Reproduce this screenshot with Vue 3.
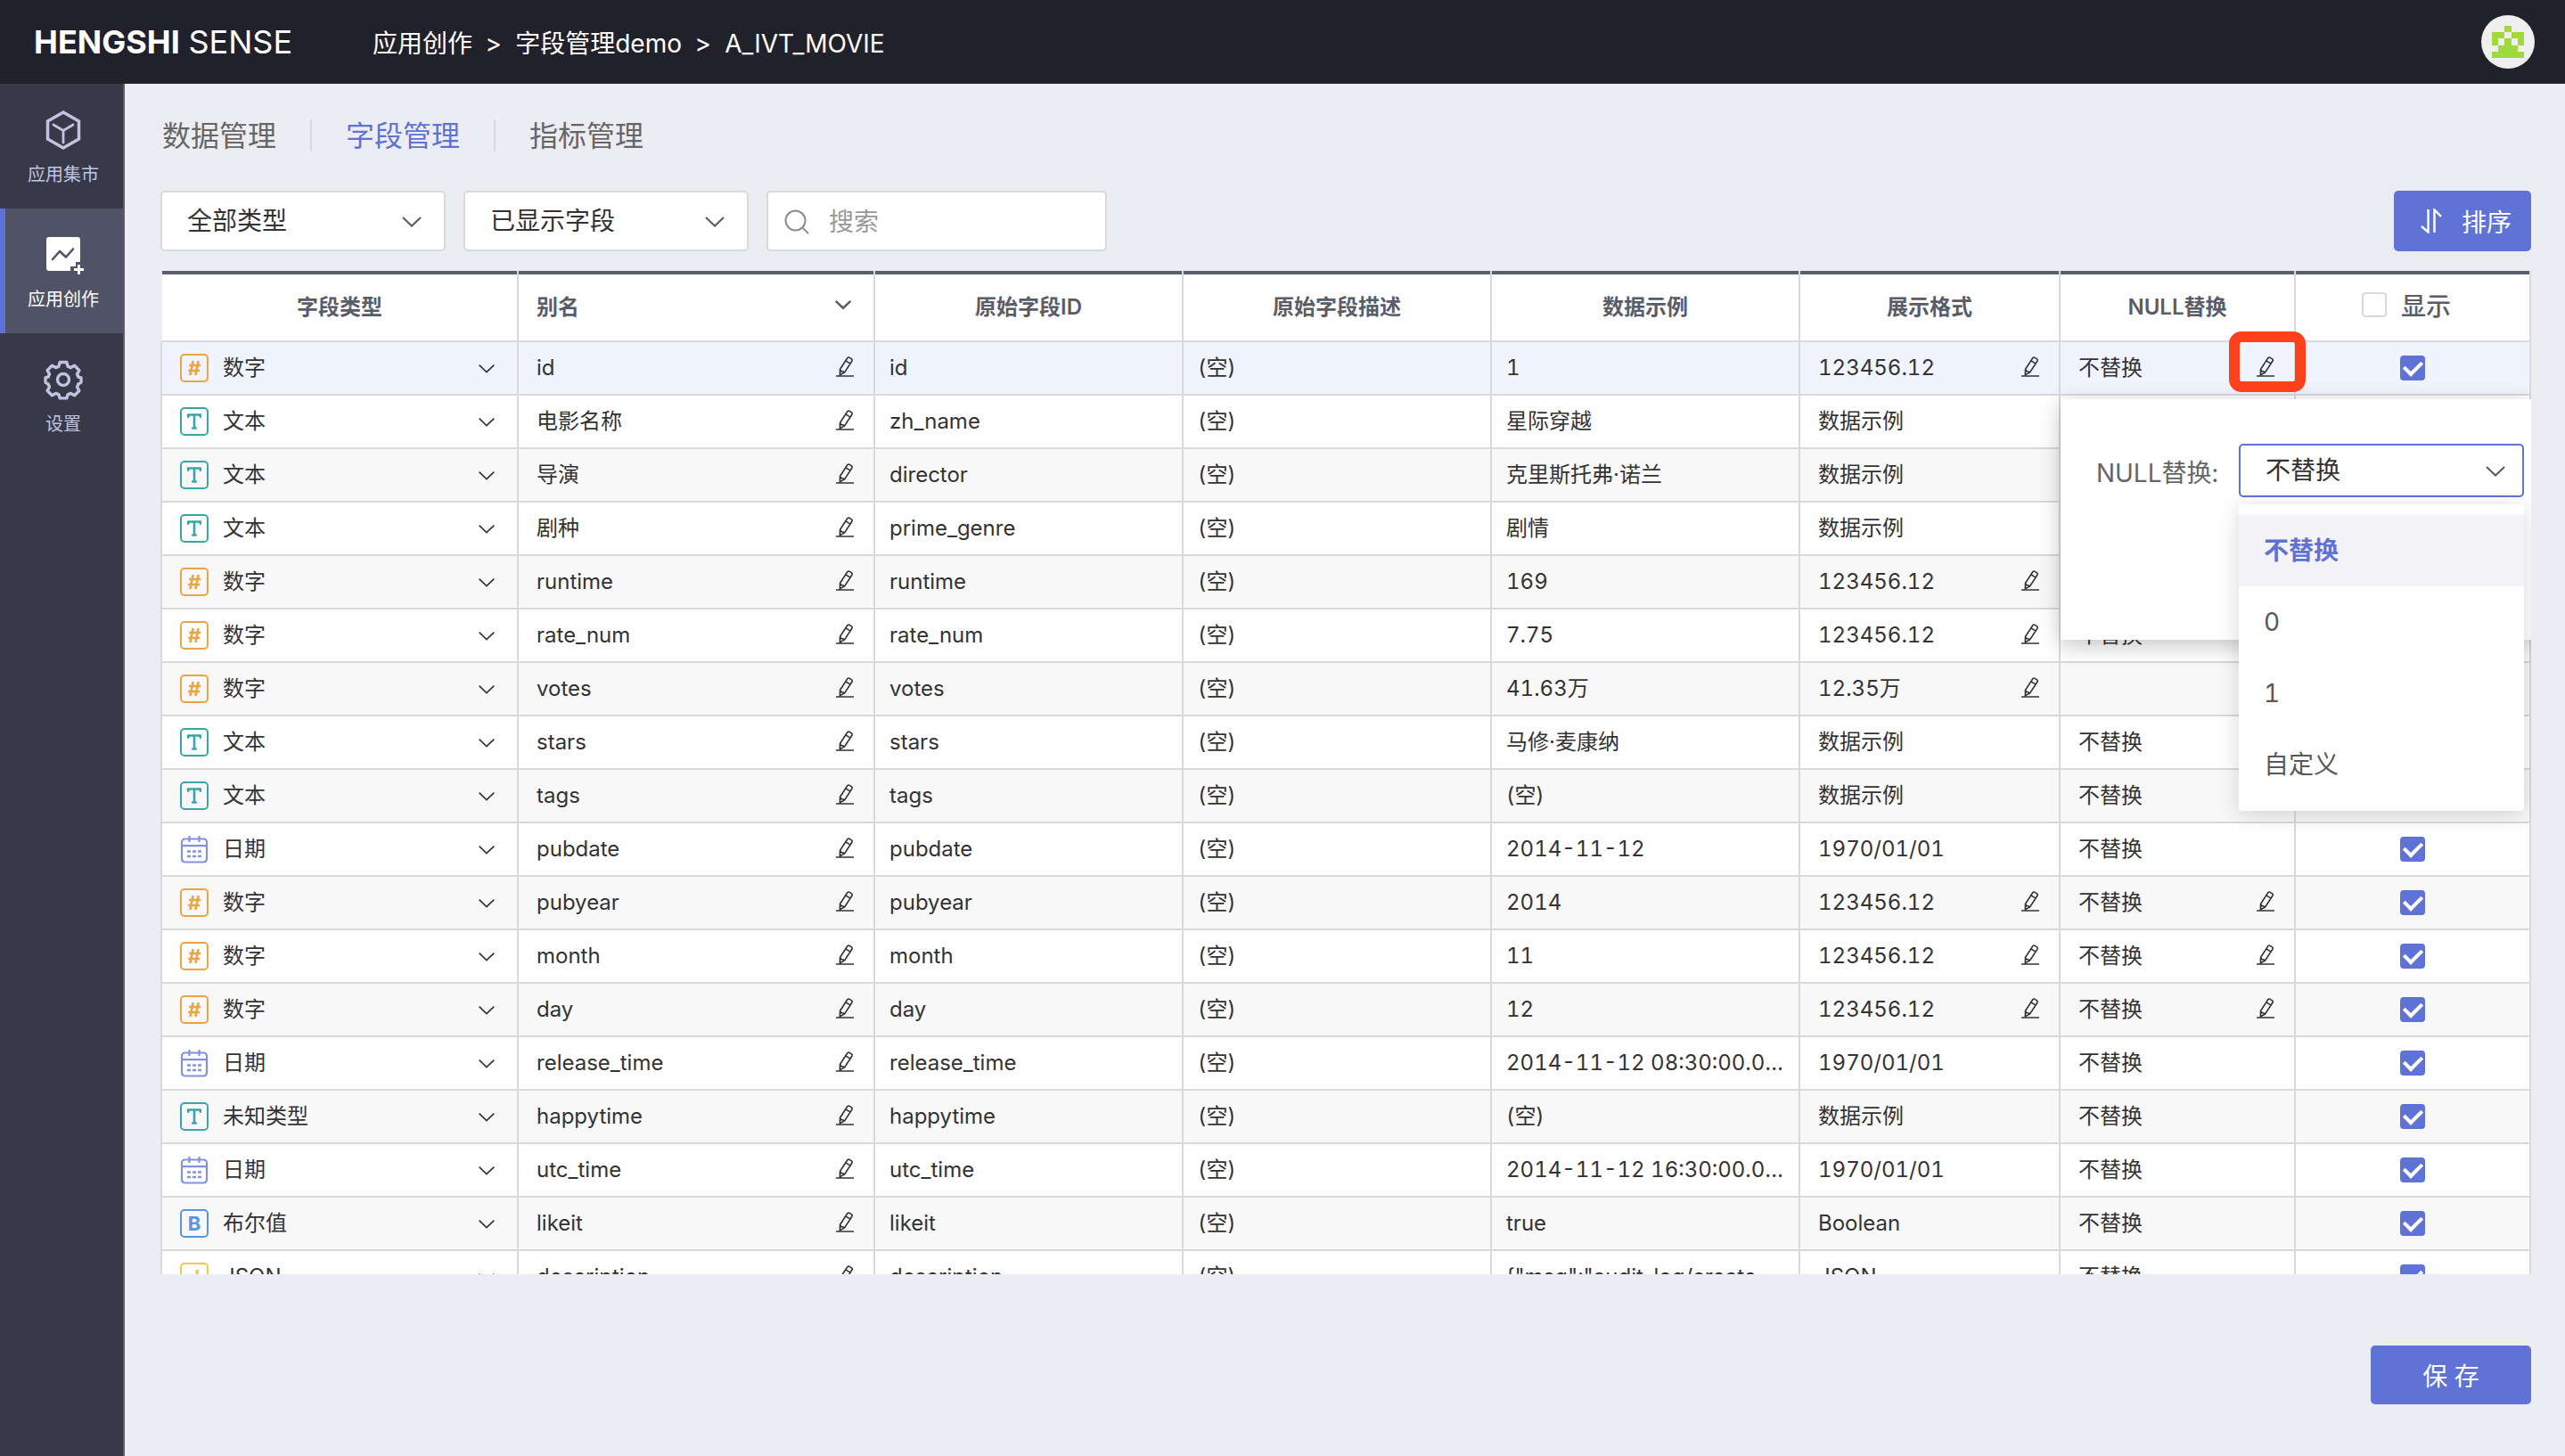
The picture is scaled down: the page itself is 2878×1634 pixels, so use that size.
<script setup>
import { ref } from 'vue'

const nav = [
  { label: '应用集市', icon: 'cube' },
  { label: '应用创作', icon: 'create', active: true },
  { label: '设置', icon: 'gear' },
]
const tabs = ['数据管理', '字段管理', '指标管理']
const crumbs = ['应用创作', '字段管理demo', 'A_IVT_MOVIE']

const typeNames = { num: '数字', text: '文本', date: '日期', unknown: '未知类型', bool: '布尔值', json: 'JSON' }

const field = (type, alias, id, sample, format, nullText = '不替换') => ({
  type, alias, id, sample, format, nullText,
  editable: type === 'num',
  visible: true,
})
const rows = ref([
  field('num', 'id', 'id', '1', '123456.12'),
  field('text', '电影名称', 'zh_name', '星际穿越', '数据示例'),
  field('text', '导演', 'director', '克里斯托弗·诺兰', '数据示例'),
  field('text', '剧种', 'prime_genre', '剧情', '数据示例'),
  field('num', 'runtime', 'runtime', '169', '123456.12'),
  field('num', 'rate_num', 'rate_num', '7.75', '123456.12'),
  field('num', 'votes', 'votes', '41.63万', '12.35万', ''),
  field('text', 'stars', 'stars', '马修·麦康纳', '数据示例'),
  field('text', 'tags', 'tags', '(空)', '数据示例'),
  field('date', 'pubdate', 'pubdate', '2014-11-12', '1970/01/01'),
  field('num', 'pubyear', 'pubyear', '2014', '123456.12'),
  field('num', 'month', 'month', '11', '123456.12'),
  field('num', 'day', 'day', '12', '123456.12'),
  field('date', 'release_time', 'release_time', '2014-11-12 08:30:00.000', '1970/01/01'),
  field('unknown', 'happytime', 'happytime', '(空)', '数据示例'),
  field('date', 'utc_time', 'utc_time', '2014-11-12 16:30:00.000', '1970/01/01'),
  field('bool', 'likeit', 'likeit', 'true', 'Boolean'),
  field('json', 'description', 'description', '{"msg":"audit_log/create_app"}', 'JSON'),
])

const nullOptions = ['不替换', '0', '1', '自定义']
const nullChoice = ref('不替换')
const allVisible = ref(false)

const avatarCells = ['00100', '11011', '10101', '01110', '11111']
  .flatMap((line, y) => [...line].map((on, x) => ({ on: on === '1', x, y })))
  .filter((cell) => cell.on)
</script>

<template>
  <div class="app">
    <header class="topbar">
      <div class="logo"><b>HENGSHI</b> SENSE</div>
      <nav class="crumbs" aria-label="路径">
        <template v-for="(crumb, i) in crumbs" :key="crumb">
          <span v-if="i" class="crumb-sep">&gt;</span>
          <a href="#">{{ crumb }}</a>
        </template>
      </nav>
      <button class="avatar" aria-label="账户">
        <svg viewBox="0 0 5 5" width="36" height="36" shape-rendering="crispEdges">
          <rect v-for="c in avatarCells" :key="`${c.x}-${c.y}`" :x="c.x" :y="c.y" width="1" height="1" fill="#a0d93a" />
        </svg>
      </button>
    </header>

    <div class="body">
      <nav class="sidebar" aria-label="主导航">
        <a v-for="item in nav" :key="item.label" href="#" class="nav-item" :class="{ active: item.active }">
          <svg v-if="item.icon === 'cube'" class="nav-icon" viewBox="0 0 44 44" fill="none" stroke="currentColor">
            <path d="M22 2 39.500 12v20L22 42 4.500 32V12z" stroke-width="3.500" />
            <path d="M11 16l11 6.500L33 16M22 22.500V36" stroke-width="2.800" stroke-linecap="round" stroke-linejoin="round" />
          </svg>
          <svg v-else-if="item.icon === 'create'" class="nav-icon" viewBox="0 0 44 44" fill="none">
            <path d="M6 2h32a3 3 0 0 1 3 3v25h-5v5h-6v5H6a3 3 0 0 1-3-3V5a3 3 0 0 1 3-3z" fill="currentColor" />
            <path d="M10 27l8-9 7 6.500 8-9" stroke="#505266" stroke-width="2.600" stroke-linecap="round" stroke-linejoin="round" />
            <path d="M39.500 33v11M34 38.500h11" stroke="currentColor" stroke-width="2.800" />
          </svg>
          <svg v-else class="nav-icon" viewBox="0 0 44 44" fill="none" stroke="currentColor" stroke-width="3.400" stroke-linejoin="round">
            <path d="M18.200 2.500h7.600l1.200 4.600 3.400 1.500 4.200-2.300 5.300 5.300-2.400 4.200 1.500 3.400 3 .8v5l-3.100 2-1.400 3.300 2.400 4.200-5.300 5.300-4.200-2.400-3.400 1.500-1.200 4h-7.600l-1.200-4-3.400-1.500-4.200 2.400-5.300-5.300 2.400-4.200-1.400-3.300-3.100-2v-5l3-.8 1.500-3.400-2.400-4.200 5.300-5.300 4.200 2.300 3.400-1.500z" />
            <circle cx="22" cy="22" r="6.500" />
          </svg>
          <span>{{ item.label }}</span>
        </a>
      </nav>

      <main class="main">
        <nav class="tabs" aria-label="管理">
          <a v-for="(tab, i) in tabs" :key="tab" href="#" class="tab" :class="{ current: i === 1 }">{{ tab }}</a>
        </nav>

        <div class="toolbar">
          <div class="picker">
            <select aria-label="字段类型筛选"><option>全部类型</option></select>
            <svg class="chevron" viewBox="0 0 24 24"><path d="M2 8l10 9.500L22 8" /></svg>
          </div>
          <div class="picker">
            <select aria-label="显示筛选"><option>已显示字段</option></select>
            <svg class="chevron" viewBox="0 0 24 24"><path d="M2 8l10 9.500L22 8" /></svg>
          </div>
          <div class="search">
            <svg viewBox="0 0 28 28" width="28" height="28" fill="none" stroke="#8c8c8c" stroke-width="2">
              <circle cx="12.500" cy="12.500" r="11" /><path d="M20.500 20.500l6.500 6.500" />
            </svg>
            <input type="text" placeholder="搜索" aria-label="搜索" />
          </div>
          <button class="primary sort">
            <svg viewBox="0 0 24 28" width="24" height="28" fill="none" stroke="currentColor" stroke-width="2.400">
              <path d="M1 20l7.500 6.500V1M15.500 27V1.500L23 9" />
            </svg>
            <span>排序</span>
          </button>
        </div>

        <div class="table-area">
          <table>
            <colgroup>
              <col class="c-type" /><col class="c-alias" /><col class="c-plain" /><col class="c-plain" />
              <col class="c-plain" /><col class="c-format" /><col class="c-null" /><col class="c-null" />
            </colgroup>
            <thead>
              <tr>
                <th scope="col">字段类型</th>
                <th scope="col" class="alias-head">
                  <div class="cell">
                    <span class="grow">别名</span>
                    <button class="icon-btn" aria-label="别名选项">
                      <svg class="chevron heavy" viewBox="0 0 24 24"><path d="M2 7l10 9.500L22 7" /></svg>
                    </button>
                  </div>
                </th>
                <th scope="col">原始字段ID</th>
                <th scope="col">原始字段描述</th>
                <th scope="col">数据示例</th>
                <th scope="col">展示格式</th>
                <th scope="col">NULL替换</th>
                <th scope="col" class="show-head">
                  <label><input v-model="allVisible" type="checkbox" class="check" />显示</label>
                </th>
              </tr>
            </thead>
            <tbody>
              <tr v-for="(row, i) in rows" :key="row.id" :class="{ selected: i === 0 }">
                <td class="edit type-cell">
                  <div class="cell">
                    <svg v-if="row.type === 'date'" class="date-icon" viewBox="0 0 32 32" fill="none" stroke="currentColor">
                      <rect x="2" y="4.500" width="28" height="26" rx="3.500" stroke-width="2.200" />
                      <path d="M2 12.200h28M10.500 1v7M21.500 1v7" stroke-width="2.200" />
                      <path d="M8 18.500h4M14 18.500h4M20 18.500h4M8 24h4M14 24h4M20 24h4" stroke-width="2.600" />
                    </svg>
                    <span v-else class="badge" :class="row.type">
                      <svg v-if="row.type === 'num'" viewBox="0 0 28 28" fill="none" stroke="currentColor" stroke-width="2.600">
                        <path d="M12.600 6l-3.200 16M18.600 6l-3.200 16M8.200 11h13M7.200 17h13" />
                      </svg>
                      <svg v-else-if="row.type === 'text' || row.type === 'unknown'" viewBox="0 0 28 28" fill="none" stroke="currentColor" stroke-width="2.600" stroke-linecap="round" stroke-linejoin="round">
                        <path d="M7.200 8.700V6.500h13.600v2.200M14 6.500V21.500M12.200 21.500h3.600" />
                      </svg>
                      <template v-else>{{ row.type === 'bool' ? 'B' : 'J' }}</template>
                    </span>
                    <select v-model="row.type" class="type-select" :aria-label="`${row.id} 字段类型`">
                      <option v-for="(name, key) in typeNames" :key="key" :value="key">{{ name }}</option>
                    </select>
                    <svg class="chevron small" viewBox="0 0 24 24"><path d="M2 8l10 9.500L22 8" /></svg>
                  </div>
                </td>
                <td class="edit">
                  <div class="cell">
                    <span class="grow">{{ row.alias }}</span>
                    <button class="icon-btn" :aria-label="`编辑别名 ${row.id}`">
                      <svg class="pencil" viewBox="0 2 24 24"><path d="M6.500 15.500L14.800 2.800q1-1.300 2.400-.4l2.300 1.500q1.300 1 .4 2.400L11.600 19l-5.200 2.600zM13 5.800l5 3.300M6.500 15.500q1 .9 1.600 2.300 1.700-.3 3.500 1.200M2 23h20" /></svg>
                    </button>
                  </div>
                </td>
                <td>{{ row.id }}</td>
                <td>(空)</td>
                <td>{{ row.sample }}</td>
                <td class="edit">
                  <div class="cell">
                    <span class="grow">{{ row.format }}</span>
                    <button v-if="row.editable" class="icon-btn" :aria-label="`编辑展示格式 ${row.id}`">
                      <svg class="pencil" viewBox="0 2 24 24"><path d="M6.500 15.500L14.800 2.800q1-1.300 2.400-.4l2.300 1.500q1.300 1 .4 2.400L11.600 19l-5.200 2.600zM13 5.800l5 3.300M6.500 15.500q1 .9 1.600 2.300 1.700-.3 3.500 1.200M2 23h20" /></svg>
                    </button>
                  </div>
                </td>
                <td class="edit" :class="{ anchor: i === 0 }">
                  <div class="cell">
                    <span class="grow">{{ row.nullText }}</span>
                    <button v-if="row.editable && row.nullText" class="icon-btn" :class="{ marked: i === 0 }" :aria-label="`编辑NULL替换 ${row.id}`">
                      <svg class="pencil" viewBox="0 2 24 24"><path d="M6.500 15.500L14.800 2.800q1-1.300 2.400-.4l2.300 1.500q1.300 1 .4 2.400L11.600 19l-5.200 2.600zM13 5.800l5 3.300M6.500 15.500q1 .9 1.600 2.300 1.700-.3 3.500 1.200M2 23h20" /></svg>
                    </button>
                  </div>
                  <div v-if="i === 0" class="popover">
                    <label class="popover-label" for="null-select">NULL替换:</label>
                    <div class="picker focused">
                      <select id="null-select" v-model="nullChoice">
                        <option v-for="o in nullOptions" :key="o">{{ o }}</option>
                      </select>
                      <svg class="chevron" viewBox="0 0 24 24"><path d="M2 8l10 9.500L22 8" /></svg>
                      <ul class="menu" role="listbox" aria-label="NULL替换">
                        <li v-for="o in nullOptions" :key="o" role="option" :aria-selected="o === nullChoice" :class="{ chosen: o === nullChoice }" @click="nullChoice = o">{{ o }}</li>
                      </ul>
                    </div>
                  </div>
                </td>
                <td>
                  <input v-model="row.visible" type="checkbox" class="check" :aria-label="`显示 ${row.id}`" />
                </td>
              </tr>
            </tbody>
          </table>
        </div>

        <button class="primary save">保 存</button>
      </main>
    </div>
  </div>
</template>

<style>
body {
  margin: 0;
  background: #ecedf2;
}
</style>

<style scoped>
* {
  box-sizing: border-box;
}
.app {
  display: flex;
  flex-direction: column;
  height: 100vh;
  font-family: Inter, "Noto Sans CJK SC", sans-serif;
  font-size: 24px;
  font-variant-numeric: tabular-nums;
  color: #333;
}
button,
select,
input {
  font: inherit;
  color: inherit;
  margin: 0;
  padding: 0;
  border: 0;
  background: none;
  outline: none;
}
select {
  appearance: none;
  flex: 1;
  min-width: 0;
}
a {
  color: inherit;
  text-decoration: none;
}

.topbar {
  display: flex;
  align-items: center;
  flex: none;
  height: 94px;
  padding: 0 34px 0 38px;
  background: #21212b;
  color: #fff;
}
.logo {
  width: 380px;
  font-size: 36px;
}
.crumbs {
  display: flex;
  align-items: baseline;
  gap: 15px;
  font-size: 28px;
}
.avatar {
  display: grid;
  place-items: center;
  width: 60px;
  height: 60px;
  margin-left: auto;
  border-radius: 50%;
  background: #efefef;
}

.body {
  display: flex;
  flex: 1;
  min-height: 0;
}
.sidebar {
  flex: none;
  width: 140px;
  background: #383948;
  border-right: 2px solid #5b5c6e;
  color: #c0c4e0;
  font-size: 20px;
}
.nav-item {
  display: flex;
  flex-direction: column;
  align-items: center;
  gap: 14px;
  height: 140px;
  padding: 30px 2px 0 6px;
  border-left: 0 solid #5c70d6;
  line-height: 28px;
}
.nav-item.active {
  padding-left: 0;
  border-left-width: 6px;
  background: #505266;
  color: #fff;
}
.nav-icon {
  flex: none;
  width: 44px;
  height: 44px;
  overflow: visible;
}

.main {
  display: flex;
  flex-direction: column;
  flex: 1;
  min-width: 0;
  padding: 40px 38px 58px 40px;
}
.tabs {
  display: flex;
  flex: none;
  height: 36px;
  margin-bottom: 44px;
  font-size: 32px;
  line-height: 38px;
  color: #666;
}
.tab {
  padding: 0 38px;
  border-left: 2px solid #d9d9dc;
}
.tab:first-child {
  padding-left: 2px;
  border-left: 0;
}
.tab.current {
  color: #5f72d5;
}

.toolbar {
  display: flex;
  flex: none;
  gap: 20px;
  height: 68px;
  margin-bottom: 22px;
  font-size: 28px;
}
.picker,
.search {
  display: flex;
  align-items: center;
  width: 320px;
  padding: 0 24px 0 28px;
  border: 2px solid #d9d9dc;
  border-radius: 5px;
  background: #fff;
  color: #333;
}
.chevron {
  flex: none;
  width: 24px;
  height: 24px;
  fill: none;
  stroke: #595959;
  stroke-width: 2;
}
.chevron.small {
  width: 20px;
  height: 20px;
  stroke: #333;
  stroke-width: 2;
}
.chevron.heavy {
  width: 20px;
  height: 20px;
  stroke: #5a5d68;
  stroke-width: 3;
}
.search {
  width: 382px;
  padding: 2px 20px 0 18px;
  gap: 22px;
}
.search input {
  flex: 1;
  min-width: 0;
}
.search input::placeholder {
  color: #999;
}
.primary {
  border-radius: 5px;
  background: #5f72d5;
  color: #fff;
  font-size: 28px;
}
.sort {
  display: flex;
  align-items: center;
  gap: 22px;
  margin-left: auto;
  padding: 0 22px 0 30px;
}
.save {
  flex: none;
  align-self: flex-end;
  width: 180px;
  height: 66px;
  margin-top: 80px;
}

.table-area {
  flex: 1;
  min-height: 0;
  overflow: hidden;
}
table {
  width: 100%;
  table-layout: fixed;
  border-collapse: separate;
  border-spacing: 0;
}
.c-type {
  width: 402px;
}
.c-alias {
  width: 400px;
}
.c-plain {
  width: 346px;
}
.c-format {
  width: 292px;
}
.c-null {
  width: 264px;
}
th {
  height: 80px;
  padding: 0 0 2px;
  background: #fff;
  border-right: 2px solid #d9d9d9;
  border-bottom: 2px solid #d9d9d9;
  box-shadow: inset 0 4px #5b5e68;
  color: #5a5d68;
  font-weight: 600;
}
th:first-child {
  border-left: 2px solid #ecedf2;
}
.alias-head {
  padding: 0 24px 2px 20px;
  text-align: left;
}
.show-head label {
  display: flex;
  align-items: center;
  justify-content: center;
  gap: 16px;
  padding-right: 14px;
  font-size: 28px;
  font-weight: 500;
}
td {
  height: 60px;
  padding: 0 16px;
  overflow: hidden;
  background: #fff;
  border-right: 2px solid #d9d9d9;
  border-bottom: 2px solid #d9d9d9;
  line-height: 36px;
  text-overflow: ellipsis;
  white-space: nowrap;
}
td:first-child {
  border-left: 2px solid #d9d9d9;
}
tr:nth-child(odd) td {
  background: #f8f8f8;
}
tr.selected td {
  background: #f0f4ff;
}
td.edit {
  padding: 0 20px;
}
td.type-cell {
  padding-right: 24px;
}
.cell {
  display: flex;
  align-items: center;
}
.grow {
  flex: 1;
}
.icon-btn {
  display: flex;
}
.pencil {
  width: 24px;
  height: 24px;
  fill: none;
  stroke: #333;
  stroke-width: 1.6;
  overflow: visible;
}
.type-select {
  margin-left: 16px;
}
.badge {
  display: grid;
  place-items: center;
  width: 32px;
  height: 32px;
  border: 2px solid currentColor;
  border-radius: 5px;
  font-size: 22px;
  font-weight: 700;
  line-height: 28px;
}
.badge.num {
  color: #eaa446;
}
.badge.text,
.badge.unknown {
  color: #3aa5a6;
}
.badge.bool {
  color: #5596dd;
}
.badge.json {
  color: #f1c84b;
}
.date-icon {
  width: 32px;
  height: 32px;
  color: #8291e2;
}
.check {
  appearance: none;
  display: grid;
  place-items: center;
  width: 28px;
  height: 28px;
  border: 2px solid #d9d9d9;
  border-radius: 4px;
  background: #fff;
}
td .check {
  margin: 0 auto;
}
.check:checked {
  border-color: #5f72d5;
  background: #5f72d5;
}
.check:checked::after {
  content: "";
  width: 9px;
  height: 16px;
  margin-bottom: 4px;
  border: solid #fff;
  border-width: 0 4px 4px 0;
  transform: rotate(45deg);
}

td.anchor {
  position: relative;
  overflow: visible;
}
.marked {
  position: relative;
}
.marked::after {
  content: "";
  position: absolute;
  z-index: 2;
  inset: -29px -33px -15px -29px;
  border: 12px solid #ff411b;
  border-radius: 14px;
}
.popover {
  position: absolute;
  z-index: 1;
  top: 64px;
  left: 0;
  display: flex;
  align-items: flex-start;
  justify-content: flex-end;
  gap: 23px;
  width: 528px;
  height: 270px;
  padding: 50px 8px 0 0;
  background: #fff;
  box-shadow: 0 6px 24px rgba(0, 0, 0, 0.24);
  font-size: 28px;
}
.popover-label {
  line-height: 66px;
  color: #666;
}
.focused {
  position: relative;
  height: 60px;
  padding-right: 18px;
  border-color: #5f72d5;
}
.menu {
  position: absolute;
  top: 66px;
  left: -2px;
  width: 320px;
  margin: 0;
  padding: 12px 0;
  border-radius: 4px;
  background: #fff;
  box-shadow: 0 4px 24px rgba(0, 0, 0, 0.16);
  list-style: none;
  color: #595959;
}
.menu li {
  padding: 0 28px;
  line-height: 80px;
}
.menu .chosen {
  background: #f4f4f7;
  color: #5f72d5;
  font-weight: 600;
}
</style>
